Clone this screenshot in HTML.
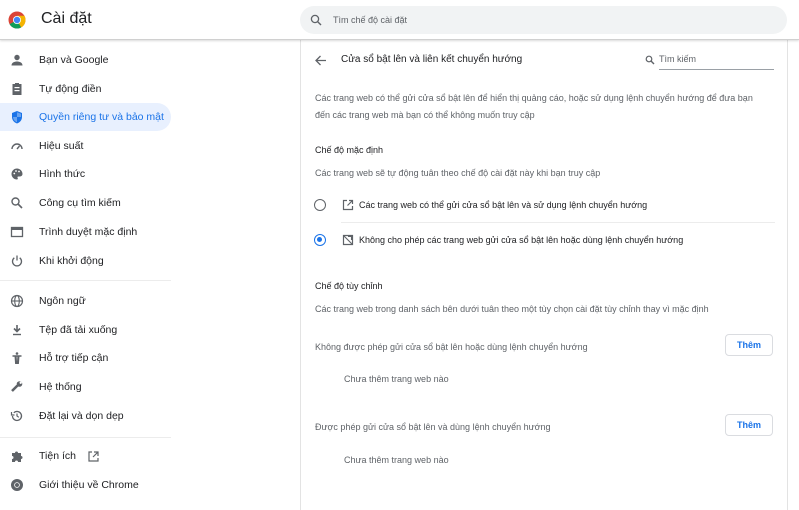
<!DOCTYPE html>
<html><head><meta charset="utf-8"><style>
*{margin:0;padding:0;box-sizing:border-box}
body{width:799px;height:500px;overflow:hidden;background:#fff;font-family:"Liberation Sans",sans-serif;color:#202124;position:relative}
.hdr{position:absolute;left:0;top:0;width:799px;height:40px;background:#fff;border-bottom:1px solid #d0d0d0;box-shadow:0 1px 2px rgba(0,0,0,.15);z-index:2}
.t{position:absolute;white-space:nowrap}
.side .t{font-size:10.5px;color:#202124;left:39px}
.ic{position:absolute;left:10px;width:14px;height:14px}
.card{position:absolute;left:300px;top:40px;width:488px;height:470px;border-left:1px solid #e3e3e3;border-right:1px solid #e3e3e3;background:#fff}
.c{font-size:9px;color:#5f6368}
.h{font-size:9px;color:#202124}
.btn{position:absolute;width:48px;height:22px;border:1px solid #dadce0;border-radius:4px;color:#1a73e8;font-size:9px;font-weight:bold;text-align:center;line-height:20px;background:#fff}
.div{position:absolute;height:1px;background:#ececec}
</style></head><body>
<div class="hdr">
<svg style="position:absolute;left:8px;top:11px" width="18" height="18" viewBox="0 0 18 18"><circle cx="9" cy="9" r="8.5" fill="#db4437"/><path d="M9 9 L1.6 13.3 A8.5 8.5 0 0 0 13.2 16.4Z" fill="#0f9d58"/><path d="M9 9 L13.2 16.4 A8.5 8.5 0 0 0 16.4 4.8 L9 4.8Z" fill="#f4b400"/><circle cx="9" cy="9" r="4" fill="#fff"/><circle cx="9" cy="9" r="3.2" fill="#4285f4"/></svg>
<div class="t" style="left:41px;top:10px;font-size:16px;color:#202124">Cài đặt</div>
<div style="position:absolute;left:300px;top:6px;width:487px;height:28px;background:#f1f3f4;border-radius:14px"></div>
<svg style="position:absolute;left:310px;top:14px" width="12" height="12" viewBox="0 0 12 12"><circle cx="5" cy="5" r="3.6" fill="none" stroke="#5f6368" stroke-width="1.3"/><path d="M7.6 7.6L11 11" stroke="#5f6368" stroke-width="1.4"/></svg>
<div class="t" style="left:333px;top:15px;font-size:9px;color:#5f6368">Tìm chế độ cài đặt</div>
</div>
<div class="side">
<div style="position:absolute;left:0;top:103px;width:171px;height:28px;background:#e8f0fe;border-radius:0 14px 14px 0"></div>
<svg class="ic" style="top:53px" viewBox="0 0 14 14"><circle cx="7" cy="4.5" r="2.7" fill="#5f6368"/><path d="M1.5 12.5c0-3 3-4 5.5-4s5.5 1 5.5 4z" fill="#5f6368"/></svg>
<div class="t" style="top:54px">Bạn và Google</div>
<svg class="ic" style="top:82px" viewBox="0 0 14 14"><rect x="2.5" y="2" width="9" height="11" fill="#5f6368"/><rect x="4.5" y="5" width="5" height="1.2" fill="#fff"/><rect x="4.5" y="8" width="5" height="1.2" fill="#fff"/><rect x="5" y="1" width="4" height="2" fill="#5f6368"/></svg>
<div class="t" style="top:83px">Tự động điền</div>
<svg class="ic" style="top:110px" viewBox="0 0 14 14"><path d="M7 1L2 3v4c0 3 2 5.5 5 6.5 3-1 5-3.5 5-6.5V3z" fill="#1a73e8"/><path d="M7 7V2.2L11 3.8V7z M7 7v5.3C4.8 11.3 3.2 9.5 3 7z" fill="#fff" opacity=".35"/></svg>
<div class="t" style="top:111px;color:#1a73e8">Quyền riêng tư và bảo mật</div>
<svg class="ic" style="top:139px" viewBox="0 0 14 14"><path d="M2 10a5 5 0 1 1 10 0" fill="none" stroke="#5f6368" stroke-width="1.4"/><path d="M7 10l2.5-3" stroke="#5f6368" stroke-width="1.4"/></svg>
<div class="t" style="top:140px">Hiệu suất</div>
<svg class="ic" style="top:167px" viewBox="0 0 14 14"><path d="M7 1.5a5.5 5.5 0 0 0 0 11c1 0 1-1 .6-1.6-.4-.7 0-1.4.8-1.4H10a2.5 2.5 0 0 0 2.5-2.5C12.5 4 10 1.5 7 1.5z" fill="#5f6368"/><circle cx="4.3" cy="6.5" r=".9" fill="#fff"/><circle cx="6" cy="4" r=".9" fill="#fff"/><circle cx="9" cy="4.5" r=".9" fill="#fff"/></svg>
<div class="t" style="top:168px">Hình thức</div>
<svg class="ic" style="top:196px" viewBox="0 0 14 14"><circle cx="5.5" cy="5.5" r="3.5" fill="none" stroke="#5f6368" stroke-width="1.4"/><path d="M8 8l4 4" stroke="#5f6368" stroke-width="1.6"/></svg>
<div class="t" style="top:197px">Công cụ tìm kiếm</div>
<svg class="ic" style="top:225px" viewBox="0 0 14 14"><rect x="1.5" y="2.5" width="11" height="9" fill="none" stroke="#5f6368" stroke-width="1.3"/><rect x="1.5" y="2.5" width="11" height="2.5" fill="#5f6368"/></svg>
<div class="t" style="top:226px">Trình duyệt mặc định</div>
<svg class="ic" style="top:254px" viewBox="0 0 14 14"><path d="M4.3 3.8a4.5 4.5 0 1 0 5.4 0" fill="none" stroke="#5f6368" stroke-width="1.3"/><path d="M7 1.5v5" stroke="#5f6368" stroke-width="1.3"/></svg>
<div class="t" style="top:255px">Khi khởi động</div>
<div class="div" style="left:0;top:280px;width:171px"></div>
<svg class="ic" style="top:294px" viewBox="0 0 14 14"><circle cx="7" cy="7" r="5.5" fill="none" stroke="#5f6368" stroke-width="1.2"/><ellipse cx="7" cy="7" rx="2.3" ry="5.5" fill="none" stroke="#5f6368" stroke-width="1.1"/><path d="M1.5 7h11" stroke="#5f6368" stroke-width="1.1"/></svg>
<div class="t" style="top:295px">Ngôn ngữ</div>
<svg class="ic" style="top:323px" viewBox="0 0 14 14"><path d="M7 2v6M4 5.5l3 3 3-3" fill="none" stroke="#5f6368" stroke-width="1.6"/><path d="M3 11.5h8" stroke="#5f6368" stroke-width="1.4"/></svg>
<div class="t" style="top:324px">Tệp đã tải xuống</div>
<svg class="ic" style="top:351px" viewBox="0 0 14 14"><circle cx="7" cy="2.5" r="1.3" fill="#5f6368"/><path d="M2.5 5h9M7 5v8M5.2 5l.6 8M8.8 5l-.6 8" stroke="#5f6368" stroke-width="1.4"/></svg>
<div class="t" style="top:352px">Hỗ trợ tiếp cận</div>
<svg class="ic" style="top:380px" viewBox="0 0 14 14"><path d="M2 11l5.5-5.5" stroke="#5f6368" stroke-width="2.6"/><circle cx="9.5" cy="4" r="2.8" fill="#5f6368"/><circle cx="10.7" cy="2.8" r="1.2" fill="#fff"/></svg>
<div class="t" style="top:381px">Hệ thống</div>
<svg class="ic" style="top:409px" viewBox="0 0 14 14"><path d="M2.5 7a4.5 4.5 0 1 0 1.3-3.2" fill="none" stroke="#5f6368" stroke-width="1.3"/><path d="M1.5 3v3h3" fill="none" stroke="#5f6368" stroke-width="1.2"/><path d="M7 4.5V7l1.8 1.3" fill="none" stroke="#5f6368" stroke-width="1.2"/></svg>
<div class="t" style="top:410px">Đặt lại và dọn dẹp</div>
<div class="div" style="left:0;top:437px;width:171px"></div>
<svg class="ic" style="top:449px" viewBox="0 0 14 14"><path d="M2 4h3a1.5 1.5 0 1 1 3 0h3v3a1.5 1.5 0 1 1 0 3v3H8a1.5 1.5 0 1 0-3 0H2V10a1.5 1.5 0 1 0 0-3z" fill="#5f6368"/></svg>
<div class="t" style="top:450px">Tiện ích</div>
<svg style="position:absolute;left:87px;top:450px" width="13" height="13" viewBox="0 0 13 13"><path d="M5 2H2v9h9V8" fill="none" stroke="#5f6368" stroke-width="1.2"/><path d="M7 2h4v4M11 2L6 7" fill="none" stroke="#5f6368" stroke-width="1.2"/></svg>
<svg class="ic" style="top:478px" viewBox="0 0 14 14"><circle cx="7" cy="7" r="6" fill="#5f6368"/><circle cx="7" cy="7" r="2.8" fill="#fff"/><circle cx="7" cy="7" r="2" fill="#5f6368"/></svg>
<div class="t" style="top:479px">Giới thiệu về Chrome</div>
</div>
<div class="card">
<svg style="position:absolute;left:13px;top:14px" width="13" height="13" viewBox="0 0 13 13"><path d="M12 6.5H2M6.5 2L2 6.5 6.5 11" fill="none" stroke="#5f6368" stroke-width="1.3"/></svg>
<div class="t h" style="left:40px;top:14px;font-size:10px">Cửa sổ bật lên và liên kết chuyển hướng</div>
<svg style="position:absolute;left:344px;top:15px" width="10" height="10" viewBox="0 0 10 10"><circle cx="4" cy="4" r="2.8" fill="none" stroke="#5f6368" stroke-width="1.2"/><path d="M6 6l3 3" stroke="#5f6368" stroke-width="1.4"/></svg>
<div class="t c" style="left:358px;top:14px">Tìm kiếm</div>
<div class="div" style="left:358px;top:29px;width:115px;background:#9aa0a6"></div>
<div class="t c" style="left:14px;top:53px">Các trang web có thể gửi cửa sổ bật lên để hiển thị quảng cáo, hoặc sử dụng lệnh chuyển hướng để đưa bạn</div>
<div class="t c" style="left:14px;top:70px">đến các trang web mà bạn có thể không muốn truy cập</div>
<div class="t h" style="left:14px;top:105px">Chế độ mặc định</div>
<div class="t c" style="left:14px;top:128px">Các trang web sẽ tự động tuân theo chế độ cài đặt này khi bạn truy cập</div>
<div style="position:absolute;left:13px;top:159px;width:12px;height:12px;border:1.5px solid #5f6368;border-radius:50%"></div>
<svg style="position:absolute;left:41px;top:159px" width="12" height="12" viewBox="0 0 12 12"><path d="M5 1.5H1.5v9h9V7" fill="none" stroke="#5f6368" stroke-width="1.2"/><path d="M7 1.5h3.5V5M10.5 1.5L5.5 6.5" fill="none" stroke="#5f6368" stroke-width="1.2"/></svg>
<div class="t h" style="left:58px;top:160px">Các trang web có thể gửi cửa sổ bật lên và sử dụng lệnh chuyển hướng</div>
<div class="div" style="left:40px;top:182px;width:434px"></div>
<div style="position:absolute;left:13px;top:194px;width:12px;height:12px;border:1.5px solid #1a73e8;border-radius:50%"><div style="position:absolute;left:2px;top:2px;width:5px;height:5px;background:#1a73e8;border-radius:50%"></div></div>
<svg style="position:absolute;left:41px;top:194px" width="12" height="12" viewBox="0 0 12 12"><path d="M1.5 1.5h9v9h-9z" fill="none" stroke="#5f6368" stroke-width="1.2"/><path d="M1.5 1.5l9 9M6 2.5h3.5V6" fill="none" stroke="#5f6368" stroke-width="1.1"/></svg>
<div class="t h" style="left:58px;top:195px">Không cho phép các trang web gửi cửa sổ bật lên hoặc dùng lệnh chuyển hướng</div>
<div class="t h" style="left:14px;top:241px">Chế độ tùy chỉnh</div>
<div class="t c" style="left:14px;top:264px">Các trang web trong danh sách bên dưới tuân theo một tùy chọn cài đặt tùy chỉnh thay vì mặc định</div>
<div class="t c" style="left:14px;top:302px">Không được phép gửi cửa sổ bật lên hoặc dùng lệnh chuyển hướng</div>
<div class="btn" style="left:424px;top:294px">Thêm</div>
<div class="t c" style="left:43px;top:334px">Chưa thêm trang web nào</div>
<div class="t c" style="left:14px;top:382px">Được phép gửi cửa sổ bật lên và dùng lệnh chuyển hướng</div>
<div class="btn" style="left:424px;top:374px">Thêm</div>
<div class="t c" style="left:43px;top:415px">Chưa thêm trang web nào</div>
</div>
</body></html>
